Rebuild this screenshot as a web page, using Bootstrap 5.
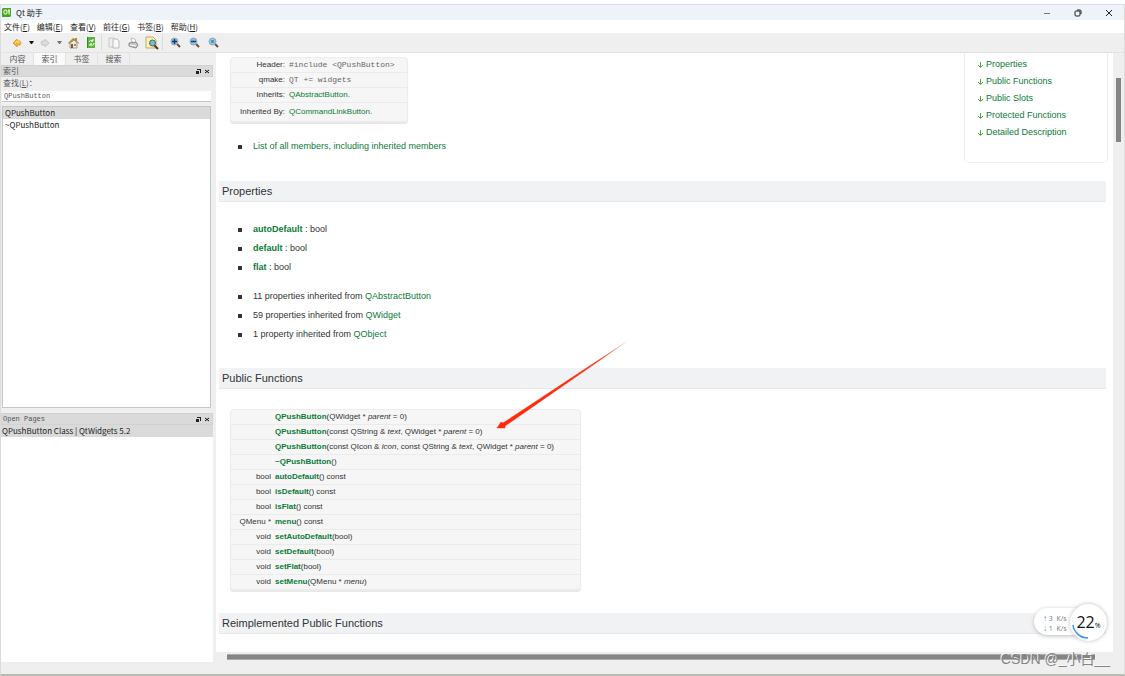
<!DOCTYPE html>
<html lang="zh-CN">
<head>
<meta charset="utf-8">
<meta name="viewport" content="width=device-width, initial-scale=1">
<title>Qt 助手</title>
<link rel="stylesheet" href="https://cdn.jsdelivr.net/npm/bootstrap@5.3.0/dist/css/bootstrap.min.css">
<style>
  :root { --ui: "Noto Sans CJK SC", sans-serif; --mono: "Liberation Mono", "Noto Sans CJK SC", monospace; --doc: "Liberation Sans", Arial, sans-serif; --chrome: #efefef; --green: #0c7a38; }
  body { font: 8px/12px var(--ui); color: #1c1c1c; background: #fff; }
  button.btn { --bs-btn-padding-x: 0; --bs-btn-padding-y: 0; --bs-btn-font-size: 8px; --bs-btn-line-height: 12px; --bs-btn-border-width: 0; --bs-btn-color: #1c1c1c; --bs-btn-border-radius: 0; }
  svg { display: block; }
  .app-window { border: 1px solid #dcdcdc; border-bottom: 2px solid #b9bcb4; margin-top: 4px; }
  .title-strip { height: 15px; background: #edf3f8; padding-left: 1px; }
  .win-ctl { width: 31px; }
  .menu-strip { height: 13px; gap: 7px; padding-left: 3px; }
  .tool-strip { height: 20px; background: var(--chrome); border-bottom: 1px solid #e2e2e2; padding-left: 9px; }
  .tool-strip .btn { width: 14px; flex: none; display: flex; justify-content: center; }
  .tool-strip .slot { margin-right: 4px; }
  .tool-strip .wide-slot { margin-right: 5px; }
  .tool-strip .group-end { border-right: 1px solid #d9d9d9; width: 18px; padding-right: 3px; margin-right: 5px; height: 15px; align-items: center; }
  .dock { width: 212px; background: var(--chrome); flex: none; }
  .dock-tabs { height: 12px; padding-left: 1px; }
  .dock-tabs .btn { width: 32px; color: #555; border-right: 1px solid #e2e2e2; }
  .dock-tabs .active { background: #fafafa; }
  .dock-title { height: 12px; background: #dadada; border: 1px solid #d2d2d2; color: #555; font: 7px/10px var(--mono); padding: 0 2px 0 1px; }
  .dock-title .cn, .find-label { font-family: "Noto Sans CJK SC", sans-serif; font-size: 8px; color: #555; }
  .dock-title .btn { width: 5px; }
  .find-label { margin: 0 0 2px 2px; }
  input.form-control.find-box { height: 11px; padding: 0 2px; border: 0; border-bottom: 1px solid #c8c8c8; border-radius: 0; font: 7px/10px var(--mono); color: #555; width: auto; margin: 0 2px 4px 1px; }
  .index-list { height: 302px; border: 1px solid #c4c5c9; background: #fff; margin: 0 2px 5px 1px; }
  .pick { display: block; width: 100%; border: 0; background: none; text-align: left; padding: 0 2px; line-height: 12px; color: #222; }
  .pick.on { background: #dadada; }
  .open-list { background: #fff; margin-bottom: 0; }
  .open-list .pick { padding: 0 1px; line-height: 12px; }
  .doc-area { border-left: 3px solid var(--chrome); background: #fff; font: 9px/19px var(--doc); color: #333; overflow: hidden; }
  .doc-area a { color: var(--green); text-decoration: none; }
  .doc-area h2 { font: 11px/20px var(--doc); background: #f1f2f4; border-bottom: 1px solid #e6e8ea; margin: 0 7px 0 3px; padding-left: 3px; color: #333; }
  .doc-area ul { list-style: none; padding-left: 22px; margin: 0; }
  .doc-area li { display: flex; align-items: center; white-space: pre; }
  .doc-area li::before { content: ""; width: 4px; height: 4px; background: #333; margin-right: 11px; }
  .doc-intro { height: 128px; }
  .members { padding-top: 14px; }
  .prop-lists { height: 166px; padding-top: 18px; }
  .prop-lists ul + ul { margin-top: 10px; }
  .api-box { background: #f6f6f6; border: 1px solid #ececec; border-radius: 4px; margin-left: 14px; box-shadow: 0 1px 1px #e4e4e4; overflow: hidden; }
  .api-box table { width: 100%; font-size: 8px; line-height: 14px; white-space: nowrap; }
  .api-box td, .api-box th { font-weight: 400; border-bottom: 1px solid #ebebeb; padding: 0; }
  .api-box tr > :first-child { text-align: right; padding-right: 4px; }
  .api-box a { font-weight: 700; }
  .class-facts { width: 178px; }
  .class-facts a { font-weight: 400; }
  .class-facts th { width: 58px; }
  .class-facts code { font: 8px/14px var(--mono); color: #666; }
  .class-facts .tall > * { line-height: 18px; }
  .functions { width: 351px; margin-top: 20px; margin-bottom: 22px; }
  .functions td:first-child { width: 44px; }
  .toc { width: 144px; height: 110px; border: 1px solid #ededed; border-top: 0; border-radius: 0 0 5px 5px; margin-right: 5px; padding: 3px 0 0 12px; line-height: 17px; }
  .toc a { display: flex; align-items: center; gap: 2px; }
  .v-track { width: 11px; background: var(--chrome); padding: 25px 3px 0 3px; flex: none; }
  .v-thumb { height: 64px; background: #858585; }
  .h-track { height: 10px; background: var(--chrome); padding: 2px 29px 2px 14px; }
  .h-thumb { height: 6px; background: #858585; border-top: 1px solid #aaa; border-bottom: 1px solid #aaa; }
  .status-strip { height: 12px; background: var(--chrome); }
  .pointer { position: absolute; left: 496px; top: 339px; }
  .speed { position: absolute; right: 18px; bottom: 35px; width: 73px; height: 37px; font: 7px/9px "Open Sans", sans-serif; color: #777; }
  .speed-pill { height: 27px; width: 56px; border-radius: 14px; background: #fff; box-shadow: 0 1px 4px #bbb; padding: 5px 0 0 9px; }
  .speed-pill b { font-size: 8px; }
  .speed-dial { position: absolute; right: 0; top: 0; width: 37px; height: 37px; border-radius: 50%; background: #fff; box-shadow: 0 0 4px #bbb; color: #111; font-size: 16px; }
  .speed-dial small { font-size: 7px; padding-top: 5px; }
  .speed-dial svg { position: absolute; inset: 0; }
  .stamp { position: absolute; right: 15px; bottom: 8px; font: 14px/17px "Liberation Sans", "Noto Sans CJK SC", sans-serif; color: #858585; text-shadow: -1px -1px 0 #f8f8f8; }
</style>
</head>
<body class="vh-100 overflow-hidden d-flex flex-column position-relative">
<div class="app-window flex-fill d-flex flex-column">
  <header class="title-strip d-flex align-items-center">
    <svg width="10" height="11" viewBox="0 0 10 11"><path d="M1 1h8v8l-1 1H0V2z" fill="#46a51c"/><rect x="2" y="3" width="3" height="4" rx="1" fill="none" stroke="#fff"/><path d="M7 2v5h1M6 4h2" stroke="#fff" fill="none"/></svg>
    <span class="ms-1 me-auto ps-0">Qt 助手</span>
    <button class="btn win-ctl" aria-label="最小化"><svg class="mx-auto" width="8" height="8" viewBox="0 0 8 8"><path d="M1 4.500h6" stroke="#777"/></svg></button>
    <button class="btn win-ctl" aria-label="还原"><svg class="mx-auto" width="8" height="8" viewBox="0 0 8 8"><rect x="1" y="2" width="5" height="5" rx="1" fill="none" stroke="#222"/><path d="M3 1h3q1 0 1 1v3" fill="none" stroke="#222"/></svg></button>
    <button class="btn win-ctl" aria-label="关闭"><svg class="mx-auto" width="8" height="8" viewBox="0 0 8 8"><path d="M1 1l6 6M7 1L1 7" stroke="#222"/></svg></button>
  </header>
  <nav class="menu-strip d-flex align-items-center">
    <button class="btn">文件(<u>F</u>)</button><button class="btn">编辑(<u>E</u>)</button><button class="btn">查看(<u>V</u>)</button><button class="btn">前往(<u>G</u>)</button><button class="btn">书签(<u>B</u>)</button><button class="btn">帮助(<u>H</u>)</button>
  </nav>
  <div class="tool-strip d-flex align-items-center">
    <button class="btn" aria-label="后退"><svg width="12" height="12" viewBox="0 0 12 12"><path d="M2 6l4-4v2h3l1 2-1 2H6v2z" fill="#f7b52c" stroke="#e3a03a"/><path d="M4 6l2-2v1h3" stroke="#ffe18a" fill="none"/></svg></button>
    <button class="btn" aria-label="后退历史"><svg width="5" height="4" viewBox="0 0 5 4"><path d="M0 0h5L3 3H2z" fill="#111"/></svg></button>
    <button class="btn" aria-label="前进"><svg width="10" height="12" viewBox="0 0 10 12"><path d="M9 6L5 2v2H2L1 6l1 2h3v2z" fill="#dcdcdc" stroke="#c6c6c6"/></svg></button>
    <button class="btn" aria-label="前进历史"><svg width="5" height="4" viewBox="0 0 5 4"><path d="M0 0h5L3 3H2z" fill="#777"/></svg></button>
    <button class="btn slot" aria-label="主页"><svg width="11" height="12" viewBox="0 0 11 12"><path d="M2 6v5h7V6L6 3z" fill="#f3e9d5" stroke="#a99c88"/><path d="M0 6l5-5 2 1V1h2v3l2 2v1L6 3 1 7z" fill="#b08a4a"/><path d="M3 7h2v4H3z" fill="#7e5737"/><path d="M6 7h2v2H6z" fill="#5f9bc4"/></svg></button>
    <button class="btn group-end" aria-label="同步目录"><svg width="10" height="11" viewBox="0 0 10 11"><path d="M1 0h8v11H1z" fill="#5cb53a"/><path d="M1 0h1v11H1z" fill="#348a20"/><path d="M3 5q1-3 4-1M8 6q-1 4-4 1M7 2v2H5M4 9V7h2" stroke="#fff" fill="none"/></svg></button>
    <button class="btn wide-slot" aria-label="复制"><svg width="12" height="12" viewBox="0 0 12 12"><path d="M1 1h5l1 1v8H1z" fill="#eee" stroke="#c8c8c8"/><path d="M5 2h4l2 2v7H5z" fill="#f8f8f8" stroke="#bcbcbc"/></svg></button>
    <button class="btn wide-slot" aria-label="打印"><svg width="11" height="12" viewBox="0 0 11 12"><path d="M3 1l4 1 1 4-4-1z" fill="#fff" stroke="#bbb"/><path d="M1 6l7-1 2 3-2 3-7-2z" fill="#c5c5c5" stroke="#8a8a8a"/><path d="M2 8l6 1" stroke="#fff"/></svg></button>
    <button class="btn group-end" aria-label="查找"><svg width="14" height="14" viewBox="0 0 14 14"><path d="M1 1h7l3 3v8H1z" fill="#fff2b1" stroke="#b9ad75"/><path d="M9 9l4 4" stroke="#5b3518" stroke-width="2"/><circle cx="7.500" cy="7" r="3" fill="#7cbcc8" stroke="#3e6b77"/></svg></button>
    <button class="btn wide-slot" aria-label="放大"><svg width="11" height="11" viewBox="0 0 11 11"><path d="M7 7l3 3" stroke="#734a2a" stroke-width="2"/><circle cx="4.500" cy="4.500" r="3.500" fill="#8fc2e0" stroke="#91a7b7"/><path d="M2 4.500h5M4.500 2v5" stroke="#153d69" stroke-width="1.500"/></svg></button>
    <button class="btn wide-slot" aria-label="缩小"><svg width="11" height="11" viewBox="0 0 11 11"><path d="M7 7l3 3" stroke="#734a2a" stroke-width="2"/><circle cx="4.500" cy="4.500" r="3.500" fill="#8fc2e0" stroke="#91a7b7"/><path d="M2 4.500h5" stroke="#153d69" stroke-width="1.500"/></svg></button>
    <button class="btn" aria-label="普通大小"><svg width="11" height="11" viewBox="0 0 11 11"><path d="M7 7l3 3" stroke="#734a2a" stroke-width="2"/><circle cx="4.500" cy="4.500" r="3.500" fill="#8fcbe9" stroke="#91a7b7"/><path d="M3 3h3v3H3z" fill="#479abd"/></svg></button>
  </div>
  <main class="flex-fill d-flex" style="min-height:0">
    <aside class="dock d-flex flex-column">
      <div class="dock-tabs d-flex"><button class="btn">内容</button><button class="btn active">索引</button><button class="btn">书签</button><button class="btn">搜索</button></div>
      <div class="dock-title d-flex align-items-center"><span class="cn me-auto">索引</span>
        <button class="btn me-1" aria-label="浮动"><svg width="5" height="5" viewBox="0 0 5 5"><path d="M1 0h4v4H4V1H1zM0 2h3v3H0z" fill="#222"/></svg></button>
        <button class="btn" aria-label="关闭索引"><svg width="4" height="5" viewBox="0 0 4 5"><path d="M0 1l4 3M4 1L0 4" stroke="#111"/></svg></button></div>
      <label class="find-label" for="find">查找(<u>L</u>)：</label>
      <input id="find" class="form-control find-box" value="QPushButton">
      <div class="index-list"><button class="pick on">QPushButton</button><button class="pick">~QPushButton</button></div>
      <div class="dock-title d-flex align-items-center"><span class="me-auto">Open Pages</span>
        <button class="btn me-1" aria-label="浮动"><svg width="5" height="5" viewBox="0 0 5 5"><path d="M1 0h4v4H4V1H1zM0 2h3v3H0z" fill="#222"/></svg></button>
        <button class="btn" aria-label="关闭页面列表"><svg width="4" height="5" viewBox="0 0 4 5"><path d="M0 1l4 3M4 1L0 4" stroke="#111"/></svg></button></div>
      <div class="open-list flex-fill"><button class="pick on">QPushButton Class | QtWidgets 5.2</button></div>
    </aside>
    <div class="flex-fill d-flex flex-column" style="min-width:0">
      <div class="flex-fill d-flex" style="min-height:0">
        <article class="doc-area flex-fill">
          <div class="doc-intro d-flex justify-content-between align-items-start">
            <div>
              <div class="api-box class-facts mt-1"><table>
                <tr><th>Header:</th><td><code>#include &lt;QPushButton&gt;</code></td></tr>
                <tr><th>qmake:</th><td><code>QT += widgets</code></td></tr>
                <tr><th>Inherits:</th><td><a href="#">QAbstractButton.</a></td></tr>
                <tr class="tall"><th>Inherited By:</th><td><a href="#">QCommandLinkButton.</a></td></tr>
              </table></div>
              <ul class="members"><li><a href="#">List of all members, including inherited members</a></li></ul>
            </div>
            <nav class="toc">
              <a href="#properties"><svg width="7" height="8" viewBox="0 0 7 8"><path d="M3.500 1v5M1 4l2.500 2.500L6 4" fill="none" stroke="#4cab32"/></svg>Properties</a>
              <a href="#functions"><svg width="7" height="8" viewBox="0 0 7 8"><path d="M3.500 1v5M1 4l2.500 2.500L6 4" fill="none" stroke="#4cab32"/></svg>Public Functions</a>
              <a href="#slots"><svg width="7" height="8" viewBox="0 0 7 8"><path d="M3.500 1v5M1 4l2.500 2.500L6 4" fill="none" stroke="#4cab32"/></svg>Public Slots</a>
              <a href="#protected"><svg width="7" height="8" viewBox="0 0 7 8"><path d="M3.500 1v5M1 4l2.500 2.500L6 4" fill="none" stroke="#4cab32"/></svg>Protected Functions</a>
              <a href="#details"><svg width="7" height="8" viewBox="0 0 7 8"><path d="M3.500 1v5M1 4l2.500 2.500L6 4" fill="none" stroke="#4cab32"/></svg>Detailed Description</a>
            </nav>
          </div>
          <h2 id="properties">Properties</h2>
          <div class="prop-lists">
            <ul><li><a href="#"><b>autoDefault</b></a> : bool</li><li><a href="#"><b>default</b></a> : bool</li><li><a href="#"><b>flat</b></a> : bool</li></ul>
            <ul><li>11 properties inherited from <a href="#">QAbstractButton</a></li><li>59 properties inherited from <a href="#">QWidget</a></li><li>1 property inherited from <a href="#">QObject</a></li></ul>
          </div>
          <h2 id="functions">Public Functions</h2>
          <div class="api-box functions"><table>
            <tr><td></td><td><a href="#">QPushButton</a>(QWidget * <i>parent</i> = 0)</td></tr>
            <tr><td></td><td><a href="#">QPushButton</a>(const QString &amp; <i>text</i>, QWidget * <i>parent</i> = 0)</td></tr>
            <tr><td></td><td><a href="#">QPushButton</a>(const QIcon &amp; <i>icon</i>, const QString &amp; <i>text</i>, QWidget * <i>parent</i> = 0)</td></tr>
            <tr><td></td><td><a href="#">~QPushButton</a>()</td></tr>
            <tr><td>bool</td><td><a href="#">autoDefault</a>() const</td></tr>
            <tr><td>bool</td><td><a href="#">isDefault</a>() const</td></tr>
            <tr><td>bool</td><td><a href="#">isFlat</a>() const</td></tr>
            <tr><td>QMenu *</td><td><a href="#">menu</a>() const</td></tr>
            <tr><td>void</td><td><a href="#">setAutoDefault</a>(bool)</td></tr>
            <tr><td>void</td><td><a href="#">setDefault</a>(bool)</td></tr>
            <tr><td>void</td><td><a href="#">setFlat</a>(bool)</td></tr>
            <tr><td>void</td><td><a href="#">setMenu</a>(QMenu * <i>menu</i>)</td></tr>
          </table></div>
          <h2>Reimplemented Public Functions</h2>
        </article>
        <div class="v-track"><div class="v-thumb"></div></div>
      </div>
      <div class="h-track"><div class="h-thumb"></div></div>
    </div>
  </main>
  <footer class="status-strip"></footer>
</div>
<svg class="pointer" width="134" height="92" viewBox="0 0 134 92"><defs><linearGradient id="fade" x1="0" y1="1" x2="1" y2="0"><stop offset="0" stop-color="#ff2a0c"/><stop offset=".75" stop-color="#ff2a0c"/><stop offset="1" stop-color="#ff2a0c" stop-opacity="0"/></linearGradient></defs><path d="M1 89L5 83L7 84L133 1L9 87L9 89Z" fill="url(#fade)" stroke="url(#fade)" stroke-width=".5"/></svg>
<div class="stamp">CSDN @_小白__</div>
<div class="speed">
  <div class="pt-1"><div class="speed-pill"><div><b style="color:#2a8cf0">↑</b> 3 &nbsp;K/s</div><div><b style="color:#2dbd58">↓</b> 1 &nbsp;K/s</div></div></div>
  <div class="speed-dial d-flex align-items-center justify-content-center"><span>22</span><small>%</small><svg width="37" height="37" viewBox="0 0 37 37"><path d="M3 21a15 15 0 0 0 15 13" fill="none" stroke="#3b8ef3" stroke-width="1.500"/></svg></div>
</div>
<script src="https://cdn.jsdelivr.net/npm/bootstrap@5.3.0/dist/js/bootstrap.bundle.min.js"></script>
</body>
</html>
